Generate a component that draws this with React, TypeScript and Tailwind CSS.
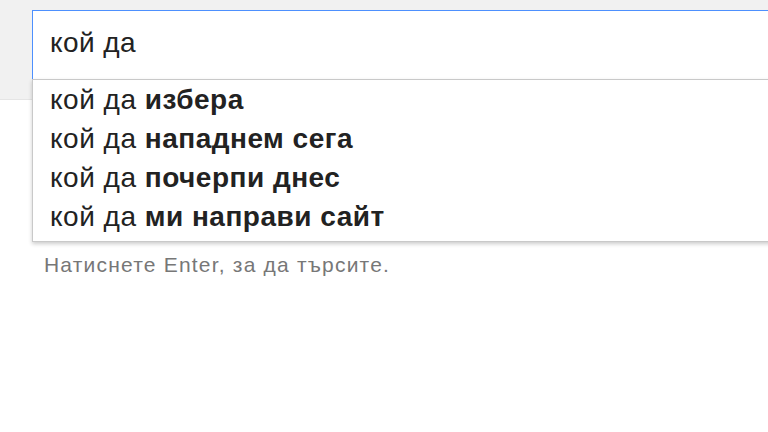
import React from "react";

const suggestions = [
  "избера",
  "нападнем сега",
  "почерпи днес",
  "ми направи сайт",
];

export default function App() {
  return (
    <div
      className="w-[768px] h-[432px] overflow-hidden bg-white relative"
      style={{ fontFamily: '"Liberation Sans", Arial, sans-serif' }}
    >
      <div className="h-[100px] bg-[#f1f1f1] border-b border-[#e5e5e5] pt-[10px] pl-[32px]">
        <div className="relative w-[800px]">
          <div className="h-[70px] bg-white border border-[#4d90fe] border-b-[#d9d9d9] pl-[17px] pt-[12px] text-[28px] leading-[39px] tracking-[0.4px] text-[#222]">
            кой да
          </div>
          <div className="absolute left-0 top-[69px] w-full bg-white border border-[#c9c9c9] shadow-[0_2px_4px_rgba(0,0,0,0.2)] pb-[5px] z-10">
            {suggestions.map((s) => (
              <div
                key={s}
                className="pl-[17px] text-[28px] leading-[39px] tracking-[0.5px] text-[#222]"
              >
                кой да <b className="font-bold">{s}</b>
              </div>
            ))}
          </div>
        </div>
      </div>
      <div className="pl-[44px] mt-[154px] text-[21px] leading-[22px] tracking-[1.2px] text-[#777]">
        Натиснете Enter, за да търсите.
      </div>
    </div>
  );
}
